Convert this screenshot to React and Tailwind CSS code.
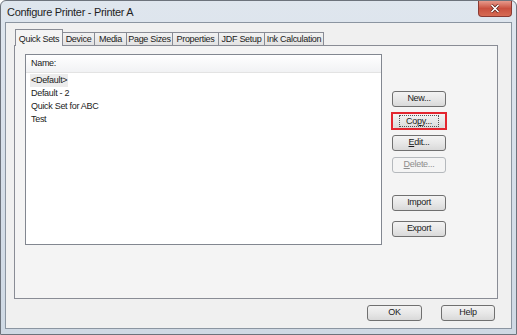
import React from 'react';

const tabs = [
  { label: 'Quick Sets', w: 'w-[48px]', active: true },
  { label: 'Device', w: 'w-[32px]' },
  { label: 'Media', w: 'w-[32px]' },
  { label: 'Page Sizes', w: 'w-[46px]' },
  { label: 'Properties', w: 'w-[46px]' },
  { label: 'JDF Setup', w: 'w-[46px]' },
  { label: 'Ink Calculation', w: 'w-[59px]' },
];

const quickSets = ['<Default>', 'Default - 2', 'Quick Set for ABC', 'Test'];

const Btn = ({ children, className = '', disabled = false }) => (
  <div
    className={`flex h-[16px] w-[54px] items-center justify-center rounded-[3px] border ${
      disabled
        ? 'border-[#b5b9bd] bg-[#f4f4f4] text-[#8d8d8d]'
        : 'border-[#707070] bg-gradient-to-b from-[#f3f3f3] via-[#e8e8e8] to-[#d9d9d9] text-[#1b1b1b]'
    } ${className}`}
  >
    {children}
  </div>
);

export default function App() {
  return (
    <div
      className="flex h-[335px] w-[517px] flex-col rounded-t-[6px] border border-[#6d737c] bg-gradient-to-b from-[#dfe6ee] via-[#d6dfe9] to-[#cfd9e4] text-[9px] tracking-[-0.3px] text-[#1b1b1b]"
      style={{ fontFamily: '"Liberation Sans", Arial, sans-serif' }}
    >
      {/* title bar */}
      <div className="flex h-[21px] shrink-0 items-start">
        <div className="pl-[6px] pt-[3px] text-[11px] text-[#1e1e1e]">Configure Printer - Printer A</div>
        <div className="ml-auto mr-[4px] flex h-[16px] w-[34px] items-center justify-center rounded-b-[4px] border border-t-0 border-[#8a3a33] bg-gradient-to-b from-[#e79a8c] via-[#c9503f] to-[#d66b54]">
          <svg width="10" height="9" viewBox="0 0 10 9">
            <path d="M1.5 1 L8.5 8 M8.5 1 L1.5 8" stroke="#5a1d15" strokeWidth="3" />
            <path d="M1.5 1 L8.5 8 M8.5 1 L1.5 8" stroke="#ffffff" strokeWidth="1.6" />
          </svg>
        </div>
      </div>

      {/* client area */}
      <div className="mx-[4px] mb-[5px] flex flex-1 flex-col border border-[#8b95a1] bg-[#f0f0f0] pl-[8px] pt-[6px]">
        {/* tab strip */}
        <div className="flex h-[17px] items-end pl-[1px]">
          {tabs.map((t) =>
            t.active ? (
              <div
                key={t.label}
                className={`relative z-10 flex h-[17px] ${t.w} items-start justify-center border border-b-0 border-[#898c95] bg-[#f4f4f4] pt-[3px]`}
              >
                {t.label}
              </div>
            ) : (
              <div
                key={t.label}
                className={`flex h-[14px] ${t.w} items-center justify-center border border-b-0 border-l-0 border-[#898c95] bg-gradient-to-b from-[#f2f2f2] to-[#e1e1e1]`}
              >
                {t.label}
              </div>
            )
          )}
        </div>

        {/* tab panel */}
        <div className="-mt-[1px] flex h-[254px] w-[484px] border border-[#898c95] bg-[#f4f4f4] pl-[10px] pt-[8px]">
          {/* list box */}
          <div className="flex h-[191px] w-[357px] flex-col border border-[#828790] bg-white">
            <div className="flex h-[18px] items-center border-b border-[#e3e3e3] bg-gradient-to-b from-white to-[#f1f2f4] pl-[5px]">
              Name:
            </div>
            <div className="flex flex-col pl-[4px] pt-[1px]">
              {quickSets.map((q, i) => (
                <div key={q} className="flex h-[13px] items-center">
                  <span className={`px-[1px] ${i === 0 ? 'bg-[#ececec]' : ''}`}>{q}</span>
                </div>
              ))}
            </div>
          </div>

          {/* side buttons */}
          <div className="ml-[10px] flex flex-col pt-[37px]">
            <Btn>New...</Btn>
            <div className="-ml-[1px] mt-[5px] flex h-[18px] w-[56px] items-center justify-center border-2 border-[#e3262f]">
              <div className="flex h-[14px] w-[52px] items-center justify-center rounded-[2px] bg-gradient-to-b from-[#f3f3f3] via-[#e8e8e8] to-[#d9d9d9]">
                <span className="border border-dotted border-[#555] px-[6px] leading-[10px]">
                  Co<span className="underline">p</span>y...
                </span>
              </div>
            </div>
            <Btn className="mt-[5px]">
              <span><span className="underline">E</span>dit...</span>
            </Btn>
            <Btn className="mt-[6px]" disabled>
              <span><span className="underline">D</span>elete...</span>
            </Btn>
            <Btn className="mt-[22px]">Import</Btn>
            <Btn className="mt-[10px]">Export</Btn>
          </div>
        </div>

        {/* bottom buttons */}
        <div className="flex justify-end gap-[19px] pr-[16px] pt-[6px]">
          <Btn className="w-[55px]">OK</Btn>
          <Btn>Help</Btn>
        </div>
      </div>
    </div>
  );
}
